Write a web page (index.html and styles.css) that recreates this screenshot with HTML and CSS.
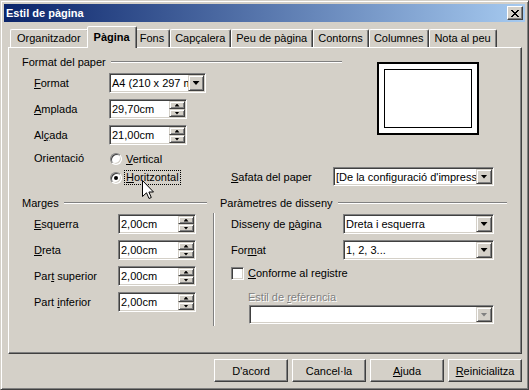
FILE: index.html
```html
<!DOCTYPE html>
<html lang="ca">
<head>
    <meta charset="UTF-8" />
    <title>Estil de pàgina</title>
    <link rel="stylesheet" href="styles.css">
</head>
<body>
    <div class="window">
        <div class="titlebar">
            <span class="title">Estil de pàgina</span>
            <span class="close-btn">
                <svg width="8" height="7" viewBox="0 0 8 7" shape-rendering="crispEdges"><path d="M0 0h2v1H0zM6 0h2v1H6zM1 1h2v1H1zM5 1h2v1H5zM2 2h4v1H2zM3 3h2v1H3zM2 4h4v1H2zM1 5h2v1H1zM5 5h2v1H5zM0 6h2v1H0zM6 6h2v1H6z"/></svg>
            </span>
        </div>

        <div class="tabs">
            <div class="tab">Organitzador</div>
            <div class="tab active">Pàgina</div>
            <div class="tab">Fons</div>
            <div class="tab">Capçalera</div>
            <div class="tab">Peu de pàgina</div>
            <div class="tab">Contorns</div>
            <div class="tab">Columnes</div>
            <div class="tab">Nota al peu</div>
        </div>

        <div class="panel">
            <div class="paper-top">
                <div class="paper-main">
                    <div class="group-title"><span>Format del paper</span><i class="rule"></i></div>
                    <div class="row first">
                        <span class="lbl"><u>F</u>ormat</span>
                        <div class="combo format-combo">
                            <span class="value">A4 (210 x 297 mm)</span>
                            <span class="btn"><i class="arrow-down"></i></span>
                        </div>
                    </div>
                    <div class="row">
                        <span class="lbl"><u>A</u>mplada</span>
                        <div class="field">
                            <span class="value">29,70cm</span>
                            <span class="spin"><span><i class="arrow-up"></i></span><span><i class="arrow-dn"></i></span></span>
                        </div>
                    </div>
                    <div class="row">
                        <span class="lbl">Al<u>ç</u>ada</span>
                        <div class="field">
                            <span class="value">21,00cm</span>
                            <span class="spin"><span><i class="arrow-up"></i></span><span><i class="arrow-dn"></i></span></span>
                        </div>
                    </div>
                </div>
                <div class="preview"><div class="preview-margin"></div></div>
            </div>

            <div class="orient-row">
                <span class="lbl">Orientació</span>
                <div class="radios">
                    <div class="radio-item"><i class="radio"></i><span><u>V</u>ertical</span></div>
                    <div class="radio-item second"><i class="radio checked"></i><span class="focus"><u>H</u>oritzontal</span></div>
                </div>
                <div class="tray">
                    <span class="tray-lbl"><u>S</u>afata del paper</span>
                    <div class="combo tray-combo">
                        <span class="value">[De la configuració d'impressora]</span>
                        <span class="btn"><i class="arrow-down"></i></span>
                    </div>
                </div>
            </div>

            <div class="lower">
                <div class="margins">
                    <div class="group-title"><span>Marges</span><i class="rule"></i></div>
                    <div class="row first">
                        <span class="lbl"><u>E</u>squerra</span>
                        <div class="field">
                            <span class="value">2,00cm</span>
                            <span class="spin"><span><i class="arrow-up"></i></span><span><i class="arrow-dn"></i></span></span>
                        </div>
                    </div>
                    <div class="row">
                        <span class="lbl"><u>D</u>reta</span>
                        <div class="field">
                            <span class="value">2,00cm</span>
                            <span class="spin"><span><i class="arrow-up"></i></span><span><i class="arrow-dn"></i></span></span>
                        </div>
                    </div>
                    <div class="row">
                        <span class="lbl">Par<u>t</u> superior</span>
                        <div class="field">
                            <span class="value">2,00cm</span>
                            <span class="spin"><span><i class="arrow-up"></i></span><span><i class="arrow-dn"></i></span></span>
                        </div>
                    </div>
                    <div class="row">
                        <span class="lbl">Part <u>i</u>nferior</span>
                        <div class="field">
                            <span class="value">2,00cm</span>
                            <span class="spin"><span><i class="arrow-up"></i></span><span><i class="arrow-dn"></i></span></span>
                        </div>
                    </div>
                </div>

                <div class="vsep"></div>

                <div class="params">
                    <div class="group-title"><span>Paràmetres de disseny</span><i class="rule"></i></div>
                    <div class="row first">
                        <span class="lbl">Disseny de <u>p</u>àgina</span>
                        <div class="combo">
                            <span class="value">Dreta i esquerra</span>
                            <span class="btn"><i class="arrow-down"></i></span>
                        </div>
                    </div>
                    <div class="row">
                        <span class="lbl">For<u>m</u>at</span>
                        <div class="combo">
                            <span class="value">1, 2, 3...</span>
                            <span class="btn"><i class="arrow-down"></i></span>
                        </div>
                    </div>
                    <div class="check-row">
                        <i class="checkbox"></i><span><u>C</u>onforme al registre</span>
                    </div>
                    <div class="ref-lbl disabled">Estil de <u>r</u>efèrencia</div>
                    <div class="combo ref-combo">
                        <span class="value"></span>
                        <span class="btn"><i class="arrow-down off"></i></span>
                    </div>
                </div>
            </div>
        </div>

        <div class="buttons">
            <button type="button">D'acord</button>
            <button type="button">Cancel·la</button>
            <button type="button"><u>A</u>juda</button>
            <button type="button"><u>R</u>einicialitza</button>
        </div>

        <svg class="cursor" width="13" height="20" viewBox="0 0 13 20"><path d="M0.5 0.5V16.5L4.5 12.8L7 18.5L9.3 17.5L6.9 12H11.5Z" fill="#fff" stroke="#000"/></svg>
    </div>
</body>
</html>
```

FILE: styles.css
```css
* {
    box-sizing: border-box;
}

body {
    margin: 0;
    font-family: "Liberation Sans", Arial, sans-serif;
    font-size: 11px;
    color: #000;
    background: #d4d0c8;
}

u {
    text-decoration-thickness: 1px;
    text-underline-offset: 1px;
}

.window {
    position: relative;
    width: 529px;
    height: 390px;
    padding: 3px;
    background: #d4d0c8;
    border: 1px solid;
    border-color: #d4d0c8 #404040 #404040 #d4d0c8;
    box-shadow: inset 1px 1px #fff, inset -1px -1px #808080;
}

/* title bar */
.titlebar {
    display: flex;
    align-items: center;
    height: 18px;
    padding-left: 2px;
    background: linear-gradient(to right, #0a246a, #a6caf0);
    color: #fff;
    font-weight: bold;
}

.close-btn {
    display: flex;
    align-items: center;
    justify-content: center;
    width: 16px;
    height: 14px;
    margin-left: auto;
    margin-right: 2px;
    background: #d4d0c8;
    border: 1px solid;
    border-color: #fff #404040 #404040 #fff;
    box-shadow: inset -1px -1px #808080;
}

/* tabs */
.tabs {
    display: flex;
    align-items: flex-end;
    height: 21px;
    margin-top: 4px;
    padding-left: 6px;
}

.tab {
    height: 18px;
    padding: 0 5px 0 4px;
    line-height: 17px;
    white-space: nowrap;
    border: 1px solid;
    border-bottom: none;
    border-color: #fff #404040 transparent #fff;
    border-radius: 2px 2px 0 0;
    box-shadow: inset -1px 0 #808080;
}

.tab:first-child {
    padding: 0 7px 0 6px;
}

.tab.active {
    position: relative;
    z-index: 1;
    height: 22px;
    margin: 0 -2px -1px;
    padding: 2px 6px 0;
    font-weight: bold;
    background: #d4d0c8;
}

.panel {
    height: 307px;
    margin: 0 3px 0 4px;
    padding: 7px 0 0 13px;
    border: 1px solid;
    border-color: #fff #404040 #404040 #fff;
    box-shadow: inset -1px -1px #808080;
}

.group-title {
    display: flex;
    align-items: center;
    gap: 5px;
    height: 14px;
}

.group-title .rule {
    flex: 1;
    height: 2px;
    border-top: 1px solid #808080;
    border-bottom: 1px solid #fff;
}

.row {
    display: flex;
    align-items: center;
    height: 20px;
    margin-top: 6px;
    padding-left: 12px;
}

.row.first {
    margin-top: 4px;
}

/* sunken inputs */
.field,
.combo {
    display: flex;
    width: 78px;
    height: 20px;
    padding: 1px;
    background: #fff;
    border: 1px solid;
    border-color: #808080 #fff #fff #808080;
    box-shadow: inset 1px 1px #404040, inset -1px -1px #d4d0c8;
}

.value {
    flex: 1;
    padding-left: 1px;
    line-height: 16px;
    white-space: nowrap;
    overflow: hidden;
}

.spin {
    display: flex;
    flex-direction: column;
    width: 16px;
}

.spin > span,
.btn {
    display: flex;
    align-items: center;
    justify-content: center;
    background: #d4d0c8;
    border: 1px solid;
    border-color: #d4d0c8 #404040 #404040 #d4d0c8;
    box-shadow: inset 1px 1px #fff, inset -1px -1px #808080;
}

.spin > span {
    flex: 1;
}

.btn {
    width: 16px;
}

.arrow-down {
    width: 7px;
    height: 4px;
    background: #000;
    clip-path: polygon(0 0, 100% 0, 50% 100%);
}

.arrow-down.off {
    background: #808080;
}

.arrow-up,
.arrow-dn {
    width: 5px;
    height: 3px;
    background: #000;
}

.arrow-up {
    clip-path: polygon(50% 0, 100% 100%, 0 100%);
}

.arrow-dn {
    clip-path: polygon(0 0, 100% 0, 50% 100%);
}

/* paper format */
.paper-top {
    display: flex;
}

.paper-main {
    width: 320px;
}

.paper-main .lbl {
    width: 75px;
}

.format-combo {
    width: 97px;
}

.preview {
    width: 102px;
    height: 73px;
    margin: 7px 0 0 35px;
    padding: 5px;
    border: 2px solid #000;
    background: #fff;
}

.preview-margin {
    height: 100%;
    border: 1px solid #000;
}

.orient-row {
    display: flex;
    margin-top: 5px;
    padding-left: 12px;
}

.orient-row > .lbl {
    width: 75px;
    line-height: 17px;
}

.radios {
    width: 122px;
}

.radio-item {
    display: flex;
    align-items: center;
    gap: 4px;
    height: 17px;
    padding-left: 1px;
}

.radio-item.second {
    margin-top: 2px;
}

.radio {
    width: 12px;
    height: 12px;
    display: flex;
    align-items: center;
    justify-content: center;
    border-radius: 50%;
    background: #fff;
    border: 1px solid;
    border-color: #808080 #fff #fff #808080;
    box-shadow: inset 1px 1px #404040, inset -1px -1px #d4d0c8;
}

.radio.checked::after {
    content: "";
    width: 4px;
    height: 4px;
    border-radius: 50%;
    background: #000;
}

.focus {
    margin-left: -1px;
    padding: 0 1px;
    line-height: 13px;
    outline: 1px dotted #000;
}

.tray {
    display: flex;
    align-items: center;
    align-self: flex-end;
    height: 19px;
}

.tray-lbl {
    width: 102px;
}

.tray-combo {
    width: 161px;
    height: 19px;
}

/* lower groups */
.lower {
    display: flex;
    margin-top: 10px;
}

.margins {
    width: 185px;
}

.margins .lbl {
    width: 84px;
}

.vsep {
    width: 2px;
    height: 113px;
    margin: 17px 0 0 6px;
    border-left: 1px solid #808080;
    border-right: 1px solid #fff;
}

.params {
    width: 287px;
    margin-left: 5px;
}

.params .row {
    padding-left: 11px;
}

.params .lbl {
    width: 112px;
}

.params .combo {
    width: 151px;
}

.check-row {
    display: flex;
    align-items: center;
    gap: 4px;
    height: 14px;
    margin-top: 6px;
    padding-left: 11px;
}

.checkbox {
    width: 13px;
    height: 13px;
    background: #fff;
    border: 1px solid;
    border-color: #808080 #fff #fff #808080;
    box-shadow: inset 1px 1px #404040, inset -1px -1px #d4d0c8;
}

.ref-lbl {
    margin-top: 11px;
    padding-left: 28px;
    line-height: 13px;
}

.disabled {
    color: #808080;
    text-shadow: 1px 1px #fff;
}

.params .ref-combo {
    width: 245px;
    height: 19px;
    margin: 1px 0 0 29px;
}

/* bottom buttons */
.buttons {
    display: flex;
    justify-content: flex-end;
    gap: 4px;
    margin-top: 5px;
    padding-right: 3px;
}

.buttons button {
    width: 74px;
    height: 23px;
    padding: 0;
    font-family: inherit;
    font-size: 11px;
    color: #000;
    background: #d4d0c8;
    border: 1px solid;
    border-color: #fff #404040 #404040 #fff;
    box-shadow: inset -1px -1px #808080;
}

.cursor {
    position: absolute;
    left: 141px;
    top: 179px;
}
```
